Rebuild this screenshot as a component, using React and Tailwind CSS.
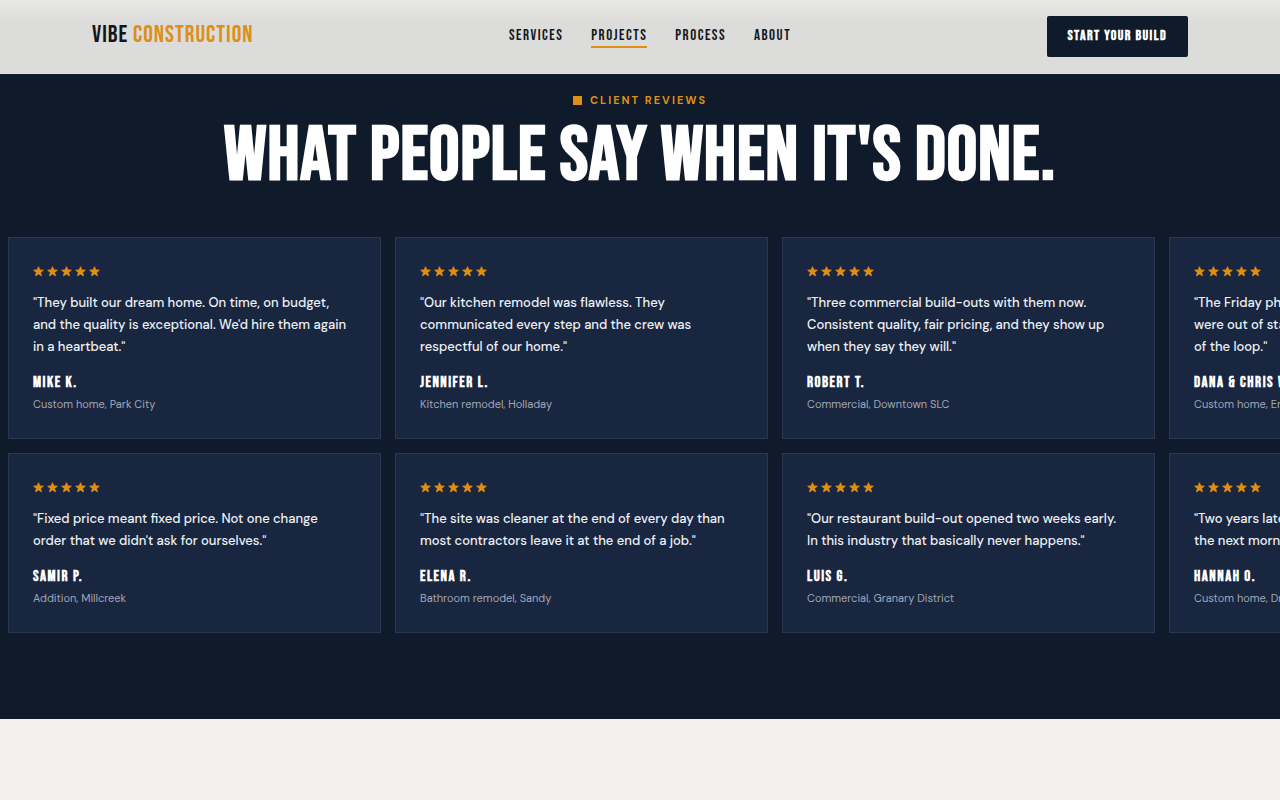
const display = "font-['Bebas_Neue','Roboto_Condensed',sans-serif] uppercase";

const links = ['Services', 'Projects', 'Process', 'About'];

const rowOne = [
  { quote: "They built our dream home. On time, on budget, and the quality is exceptional. We'd hire them again in a heartbeat.", name: 'Mike K.', job: 'Custom home, Park City' },
  { quote: 'Our kitchen remodel was flawless. They communicated every step and the crew was respectful of our home.', name: 'Jennifer L.', job: 'Kitchen remodel, Holladay' },
  { quote: 'Three commercial build-outs with them now. Consistent quality, fair pricing, and they show up when they say they will.', name: 'Robert T.', job: 'Commercial, Downtown SLC' },
  { quote: 'The Friday photo updates were great. We\nwere out of state and never once felt out\nof the loop.', name: 'Dana & Chris W.', job: 'Custom home, Emigration' },
];

const rowTwo = [
  { quote: "Fixed price meant fixed price. Not one change order that we didn't ask for ourselves.", name: 'Samir P.', job: 'Addition, Millcreek' },
  { quote: 'The site was cleaner at the end of every day than most contractors leave it at the end of a job.', name: 'Elena R.', job: 'Bathroom remodel, Sandy' },
  { quote: 'Our restaurant build-out opened two weeks early. In this industry that basically never happens.', name: 'Luis G.', job: 'Commercial, Granary District' },
  { quote: 'Two years later they still came out\nthe next morning.', name: 'Hannah O.', job: 'Custom home, Draper' },
];

function Star() {
  return (
    <svg viewBox="0 0 24 24" className="size-[11px]" fill="currentColor" stroke="currentColor" strokeWidth="2" strokeLinejoin="round">
      <path d="M12 1.5 14.8 8.6 22.5 9.1 16.6 14 18.5 21.4 12 17.3 5.5 21.4 7.4 14 1.5 9.1 9.2 8.6Z" />
    </svg>
  );
}

function ReviewCard({ quote, name, job }) {
  return (
    <article className="w-[373px] shrink-0 border border-[#2a3750] bg-[#192640] px-6 pt-7 pb-[26px]">
      <div className="flex gap-[3px] text-[#e08e12]" role="img" aria-label="5 out of 5 stars">
        {[1, 2, 3, 4, 5].map((n) => <Star key={n} />)}
      </div>
      <p className="mt-[15px] pr-1.5 text-[13px] leading-[22px] font-medium whitespace-pre-line text-[#eef1f5]">{`"${quote}"`}</p>
      <h3 className={`${display} mt-[15px] text-[15px] leading-5 font-bold tracking-widest text-white`}>{name}</h3>
      <p className="mt-[3px] text-[11px] leading-4 text-[#a0a7b5]">{job}</p>
    </article>
  );
}

export default function App() {
  return (
    <div className="min-h-screen bg-[#f2f1ed] font-['DM_Sans','Inter',sans-serif]">
      <header className="border-b border-[#e4e3df] bg-linear-to-b from-[#e9e8e3] to-[#dcdcda] to-30%">
        <div className="mx-auto flex max-w-[1096px] items-center justify-between py-4">
          <a href="#" className={`${display} pb-1 text-2xl leading-8 tracking-[1px] text-[#12161c]`}>
            Vibe <span className="text-[#dd8f17]">Construction</span>
          </a>
          <nav className="flex gap-7">
            {links.map((link) => (
              <a
                key={link}
                href="#"
                className={`${display} border-b-2 text-[15px] leading-5 tracking-widest text-[#12161c] ${link === 'Projects' ? 'border-[#dd8f17]' : 'border-transparent'}`}
              >
                {link}
              </a>
            ))}
          </nav>
          <button className={`${display} h-[41px] rounded-xs bg-[#0f1a2a] px-[21px] pb-0.5 text-sm font-bold tracking-widest text-white`}>
            Start Your Build
          </button>
        </div>
      </header>

      {/* Reviews */}
      <section className="overflow-hidden bg-[#0f1a2a] pt-[18px] pb-[86px]">
        <div className="text-center">
          <p className="flex items-center justify-center gap-2 text-[11px] leading-4 font-bold tracking-[2px] text-[#dd8f17] uppercase">
            <span className="size-[9px] bg-[#dd8f17]" />
            Client Reviews
          </p>
          <h2 className={`${display} mt-[11px] text-[76px] leading-[76px] font-bold tracking-[1px] text-white`}>What people say when it's done.</h2>
        </div>

        <div className="mt-[42px] flex flex-col gap-[14px] pl-2">
          <div className="flex gap-[14px]">
            {rowOne.map((r) => <ReviewCard key={r.name} {...r} />)}
          </div>
          <div className="flex gap-[14px]">
            {rowTwo.map((r) => <ReviewCard key={r.name} {...r} />)}
          </div>
        </div>
      </section>
    </div>
  );
}
